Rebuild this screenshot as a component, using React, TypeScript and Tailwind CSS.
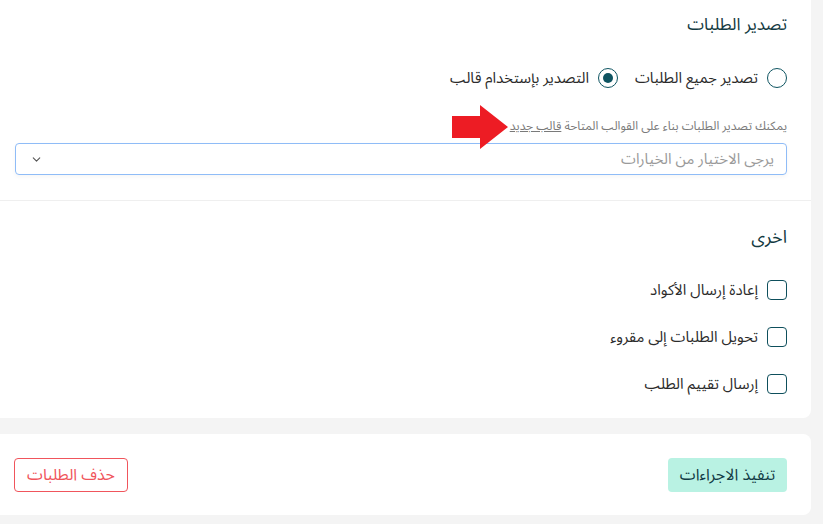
import { ChevronDown } from 'lucide-react'

const font = { fontFamily: '"Noto Sans Arabic", "Noto Sans", "DejaVu Sans", sans-serif' }

function Radio({ checked, label }: { checked?: boolean, label: string }) {
    return <label className="flex items-center gap-[9px]">
        <span className="flex items-center justify-center w-5 h-5 rounded-full border-[1.5px] border-[#0e5461]">
            {checked && <span className="w-[10px] h-[10px] rounded-full bg-[#0e5461]" />}
        </span>
        <span className="text-[15px] leading-5 text-[#2b2b2b]">{label}</span>
    </label>
}

function Check({ label }: { label: string }) {
    return <label className="flex items-center gap-[9px]">
        <span className="w-5 h-5 rounded-[4px] border-[1.5px] border-[#0e4f5c] bg-white" />
        <span className="text-[15px] leading-5 text-[#2b2b2b]">{label}</span>
    </label>
}

function RedArrow() {
    return <svg className="absolute left-[452px] top-[105px]" width="56" height="44" viewBox="0 0 56 44">
        <polygon points="0,11 28,11 28,0 56,22 28,44 28,33 0,33" fill="#ed1c24" />
    </svg>
}

export default function App() {
    return <div dir="rtl" style={font} className="w-[823px] h-[524px] bg-[#f4f4f4] pr-3 overflow-hidden">
        <div className="relative bg-white rounded-br-lg">
            <RedArrow />
            <div className="pt-[12px] pb-[25px] pr-6 pl-[15px] border-b border-[#efefef]">
                <h2 className="text-[17px] leading-[26px] text-[#143a42]">تصدير الطلبات</h2>
                <div className="flex gap-[17px] mt-[30px]">
                    <Radio label="تصدير جميع الطلبات" />
                    <Radio checked label="التصدير بإستخدام قالب" />
                </div>
                <p className="mt-[31px] text-xs leading-4 text-[#7a7a7a]">
                    يمكنك تصدير الطلبات بناء على القوالب المتاحة <span className="underline">قالب جديد</span>
                </p>
                <div className="mt-2 h-8 flex items-center justify-between pr-3 pl-[14px] rounded border border-[#8fbcf7] shadow-[0_2px_4px_rgba(0,0,0,0.04)]">
                    <span className="text-[15px] text-[#9a9a9a]">يرجى الاختيار من الخيارات</span>
                    <ChevronDown size={13} className="text-[#555]" />
                </div>
            </div>
            <div className="pt-[23px] pb-6 pr-6 pl-[15px]">
                <h2 className="text-lg leading-[26px] text-[#143a42]">اخرى</h2>
                <div className="flex flex-col gap-[27px] mt-[30px]">
                    <Check label="إعادة إرسال الأكواد" />
                    <Check label="تحويل الطلبات إلى مقروء" />
                    <Check label="إرسال تقييم الطلب" />
                </div>
            </div>
        </div>

        <div className="mt-4 bg-white rounded-r-lg pt-6 pb-[23px] pr-6 pl-[14px] flex justify-between">
            <button className="h-[34px] w-[119px] rounded bg-[#b9f2e3] text-base text-[#123c45]">تنفيذ الاجراءات</button>
            <button className="h-[34px] w-[114px] rounded border border-[#f0555c] text-base text-[#f0555c]">حذف الطلبات</button>
        </div>
    </div>
}
